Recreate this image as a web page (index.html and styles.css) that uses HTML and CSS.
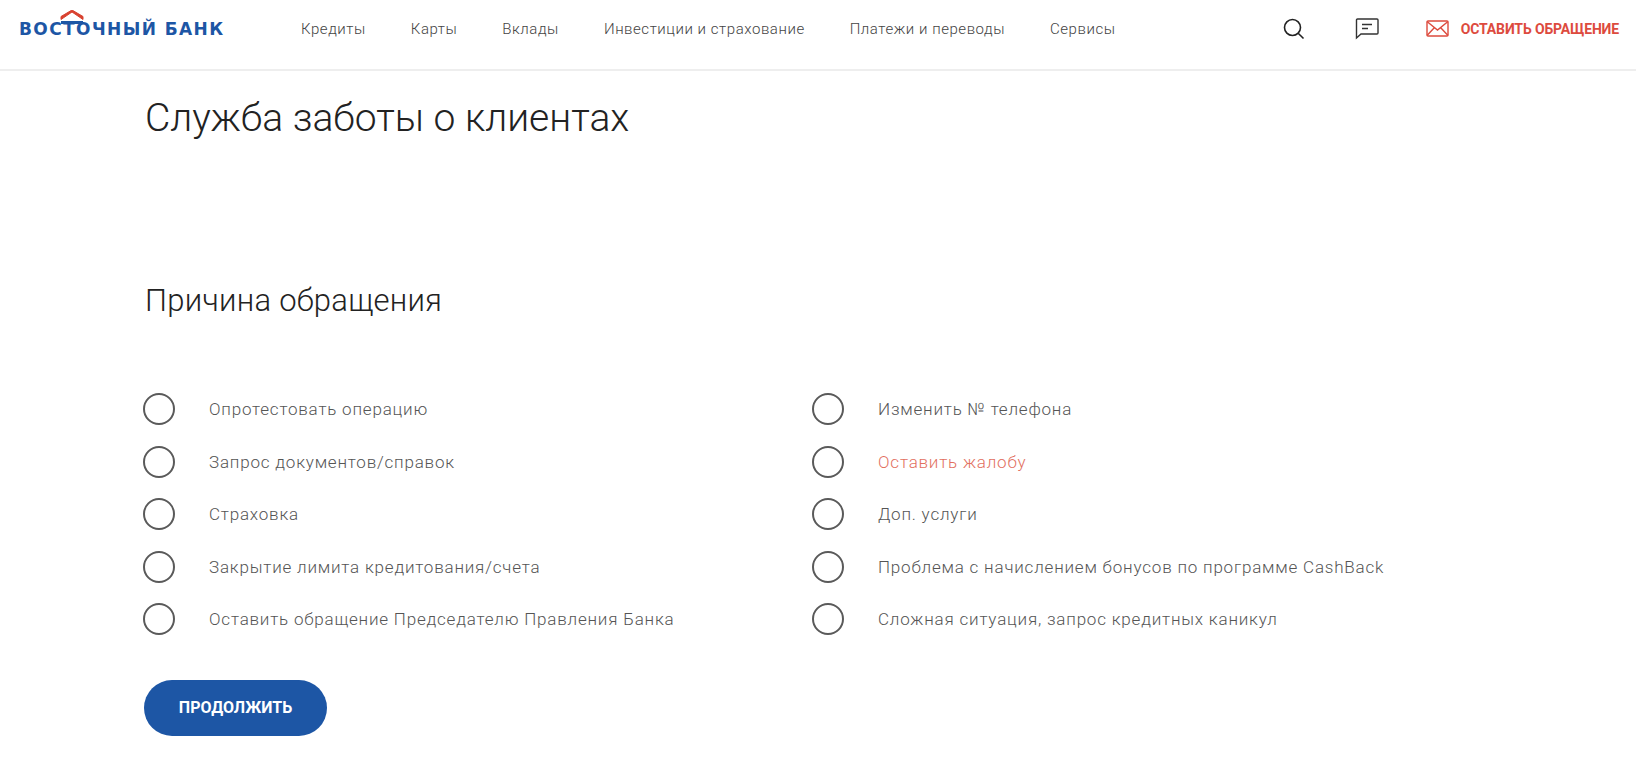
FILE: index.html
```html
<!DOCTYPE html>
<html lang="ru">

<head>
    <meta charset="UTF-8">
    <meta name="viewport" content="width=device-width, initial-scale=1.0">
    <title>Служба заботы о клиентах</title>
    <link rel="stylesheet" href="styles.css">
</head>

<body>
    <header class="header">
        <a class="logo" href="#">
            <svg class="logo-roof" width="24" height="14" viewBox="0 0 24 14">
                <path d="M1 9.5 L12 2 L23 9.5 L23 6.5 L12 0 L1 6.5 Z" fill="#d8412f" stroke="#d8412f" stroke-width="1"/>
                <path d="M1 12.5 H23" stroke="#1d56a5" stroke-width="3"/>
            </svg>
            ВОСТОЧНЫЙ БАНК
        </a>
        <nav class="nav">
            <a href="#">Кредиты</a>
            <a href="#">Карты</a>
            <a href="#">Вклады</a>
            <a href="#">Инвестиции и страхование</a>
            <a href="#">Платежи и переводы</a>
            <a href="#">Сервисы</a>
        </nav>
        <div class="header-tools">
            <svg class="icon-search" width="22" height="22" viewBox="0 0 22 22" fill="none" stroke="#222" stroke-width="1.6">
                <circle cx="9.5" cy="9.5" r="8"/>
                <path d="M15.2 15.2 L20.5 20.5"/>
            </svg>
            <svg class="icon-chat" width="24" height="22" viewBox="0 0 24 22" fill="none" stroke="#333" stroke-width="1.4">
                <path d="M2.5 1 H22 a1 1 0 0 1 1 1 V15 a1 1 0 0 1 -1 1 H6 L1.5 20 V2 a1 1 0 0 1 1 -1 Z"/>
                <path d="M7 6.5 H17 M7 10.5 H13"/>
            </svg>
            <a class="appeal" href="#">
                <svg width="23" height="17" viewBox="0 0 23 17" fill="none" stroke="#dd4b3e" stroke-width="1.4">
                    <rect x="1" y="1" width="21" height="15" rx="1"/>
                    <path d="M1 1.5 L11.5 10 L22 1.5 M1 15.5 L8.5 7.5 M22 15.5 L14.5 7.5"/>
                </svg>
                ОСТАВИТЬ ОБРАЩЕНИЕ
            </a>
        </div>
    </header>

    <main class="content">
        <h1>Служба заботы о клиентах</h1>
        <h2>Причина обращения</h2>
        <form>
            <div class="reasons">
                <label class="reason"><span class="radio"></span>Опротестовать операцию</label>
                <label class="reason"><span class="radio"></span>Изменить № телефона</label>
                <label class="reason"><span class="radio"></span>Запрос документов/справок</label>
                <label class="reason active"><span class="radio"></span>Оставить жалобу</label>
                <label class="reason"><span class="radio"></span>Страховка</label>
                <label class="reason"><span class="radio"></span>Доп. услуги</label>
                <label class="reason"><span class="radio"></span>Закрытие лимита кредитования/счета</label>
                <label class="reason"><span class="radio"></span>Проблема с начислением бонусов по программе CashBack</label>
                <label class="reason"><span class="radio"></span>Оставить обращение Председателю Правления Банка</label>
                <label class="reason"><span class="radio"></span>Сложная ситуация, запрос кредитных каникул</label>
            </div>
            <button type="button">ПРОДОЛЖИТЬ</button>
        </form>
    </main>
</body>

</html>
```

FILE: styles.css
```css
body {
    font-family: Roboto, "Liberation Sans", sans-serif;
    margin: 0;
    padding: 0;
    background-color: #fff;
    color: #222;
    height: 784px;
    overflow: hidden;
}

a {
    color: inherit;
    text-decoration: none;
}

.header {
    display: flex;
    align-items: center;
    height: 58px;
    padding: 0 17px 11px 19px;
    border-bottom: 2px solid #eee;
}

.logo {
    position: relative;
    width: 205px;
    font-family: "DejaVu Sans", "Liberation Sans", sans-serif;
    font-size: 17px;
    font-weight: 700;
    letter-spacing: 1.4px;
    color: #1d56a5;
    white-space: nowrap;
}

.logo-roof {
    position: absolute;
    left: 41px;
    top: -9px;
}

.nav {
    display: flex;
    gap: 45px;
    margin-left: 77px;
    font-size: 15px;
    font-weight: 300;
    letter-spacing: 0.55px;
    color: #444;
}

.header-tools {
    display: flex;
    align-items: center;
    margin-left: auto;
    margin-top: -1px;
}

.icon-search {
    margin-right: 50px;
}

.icon-chat {
    margin-right: 47px;
}

.appeal {
    display: flex;
    align-items: center;
    gap: 12px;
    font-size: 14px;
    font-weight: 700;
    letter-spacing: -0.15px;
    color: #dd4b3e;
}

.content {
    padding: 0 144px;
}

h1 {
    margin: 24px 0 0 1px;
    font-size: 39px;
    line-height: 46px;
    font-weight: 300;
    color: #222;
}

h2 {
    margin: 142px 0 0 1px;
    font-size: 31px;
    line-height: 36px;
    font-weight: 300;
    letter-spacing: 0.25px;
    color: #222;
}

.reasons {
    display: grid;
    grid-template-columns: 669px 1fr;
    grid-auto-rows: 52.5px;
    margin-top: 64px;
}

.reason {
    display: flex;
    align-items: center;
    font-size: 17px;
    font-weight: 300;
    letter-spacing: 0.8px;
    color: #555;
}

.reason.active {
    color: #e2705f;
}

.radio {
    width: 28px;
    height: 28px;
    margin: 0 34px 0 -1px;
    border: 2px solid #5a5a5a;
    border-radius: 50%;
    flex: none;
}

button {
    display: block;
    width: 183px;
    height: 56px;
    margin-top: 34px;
    background-color: #1d56a5;
    border: none;
    border-radius: 28px;
    color: #fff;
    font-family: inherit;
    font-size: 16px;
    font-weight: 700;
    cursor: pointer;
}
```
